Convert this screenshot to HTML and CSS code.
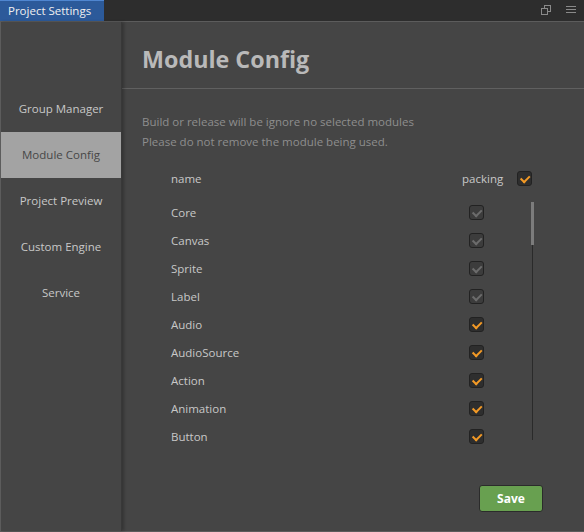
FILE: index.html
```html
<!DOCTYPE html>
<html lang="en">
<head>
    <meta charset="UTF-8">
    <title>Project Settings</title>
    <link rel="stylesheet" href="styles.css">
</head>
<body>
   <div class="titlebar">
    <span class="tab">Project Settings</span>
    <div class="win-icons">
        <svg width="10" height="10" viewBox="0 0 10 10"><rect x="3.5" y="0.5" width="6" height="6" fill="none" stroke="#8a8a8a"/><rect x="0.5" y="3.5" width="6" height="6" fill="#2d2d2d" stroke="#8a8a8a"/></svg>
        <svg width="10" height="8" viewBox="0 0 10 8"><rect x="0" y="0" width="10" height="1" fill="#8a8a8a"/><rect x="0" y="3" width="10" height="1" fill="#8a8a8a"/><rect x="0" y="6" width="10" height="1" fill="#8a8a8a"/></svg>
    </div>
   </div>

   <div class="main">
    <div class="sidebar">
        <div class="nav-item">Group Manager</div>
        <div class="nav-item active">Module Config</div>
        <div class="nav-item">Project Preview</div>
        <div class="nav-item">Custom Engine</div>
        <div class="nav-item">Service</div>
    </div>

    <div class="content">
        <h1 class="header">Module Config</h1>
        <div class="desc">
            <p>Build or release will be ignore no selected modules</p>
            <p>Please do not remove the module being used.</p>
        </div>
        <div class="table-head">
            <span class="col-name">name</span>
            <span class="col-packing">packing</span>
            <span class="check on"></span>
        </div>
        <div class="table-body">
            <div class="rows">
                <div class="row"><span class="col-name">Core</span><span class="check locked"></span></div>
                <div class="row"><span class="col-name">Canvas</span><span class="check locked"></span></div>
                <div class="row"><span class="col-name">Sprite</span><span class="check locked"></span></div>
                <div class="row"><span class="col-name">Label</span><span class="check locked"></span></div>
                <div class="row"><span class="col-name">Audio</span><span class="check on"></span></div>
                <div class="row"><span class="col-name">AudioSource</span><span class="check on"></span></div>
                <div class="row"><span class="col-name">Action</span><span class="check on"></span></div>
                <div class="row"><span class="col-name">Animation</span><span class="check on"></span></div>
                <div class="row last"><span class="col-name">Button</span><span class="check on"></span></div>
            </div>
            <div class="scrollbar"><div class="thumb"></div></div>
        </div>
        <div class="footer">
            <button class="save-btn">Save</button>
        </div>
    </div>
   </div>
</body>
</html>
```

FILE: styles.css
```css
*{
    margin:0;
    padding:0;
    box-sizing:border-box;
}
body{
    width:584px;
    height:532px;
    background:#454545;
    font-family:'Open Sans',sans-serif;
    overflow:hidden;
}
.titlebar{
    height:22px;
    background:#2d2d2d;
    border-bottom:1px solid #5c5c5c;
    display:flex;
    justify-content:space-between;
}
.tab{
    width:104px;
    height:21px;
    background:#2c5a9a;
    border-top:1px solid #4f86d0;
    color:#f0f0f0;
    font-size:11.5px;
    line-height:19px;
    padding-left:8px;
}
.win-icons{
    display:flex;
    align-items:center;
    gap:15px;
    padding-right:8px;
    padding-bottom:2px;
}
.main{
    display:flex;
    height:510px;
    border-bottom:1px solid #5c5c5c;
}
.sidebar{
    width:122px;
    background:#454545;
    border-left:1px solid #5c5c5c;
    border-right:1px solid #383838;
    box-shadow:2px 0 3px rgba(0,0,0,0.25);
    padding-top:64px;
    position:relative;
}
.nav-item{
    height:46px;
    line-height:46px;
    text-align:center;
    font-size:11.5px;
    color:#c8c8c8;
}
.nav-item.active{
    background:#a3a3a3;
    color:#474747;
}
.content{
    flex:1;
    display:flex;
    flex-direction:column;
}
.header{
    height:67px;
    border-bottom:1px solid #606060;
    font-size:23.3px;
    font-weight:700;
    color:#b9b9b9;
    padding-left:20px;
    line-height:74px;
}
.desc{
    padding:23px 0 0 20px;
    font-size:11.5px;
    line-height:20px;
    color:#8e8e8e;
}
.table-head{
    display:flex;
    align-items:center;
    height:26px;
    margin-top:13px;
    padding-left:49px;
    font-size:11.5px;
    color:#c8c8c8;
}
.table-head .col-name{
    width:291px;
}
.table-head .col-packing{
    width:55px;
}
.table-body{
    display:flex;
    height:250px;
    margin-top:7px;
}
.rows{
    width:410px;
    height:250px;
    overflow:hidden;
}
.row{
    display:flex;
    align-items:center;
    height:28px;
    padding-left:49px;
    font-size:11.5px;
    color:#c8c8c8;
}
.row.last{
    height:22px;
    align-items:flex-end;
    padding-bottom:0;
}
.row .col-name{
    width:298px;
}
.check{
    width:15px;
    height:15px;
    border:1px solid #222;
    border-radius:3px;
    background:#2e2e2e;
    position:relative;
}
.check::after{
    content:"";
    position:absolute;
    left:2px;
    top:1px;
    width:7px;
    height:4px;
    border-left:2px solid #f39a26;
    border-bottom:2px solid #f39a26;
    transform:rotate(-45deg) translate(-1px,2px);
}
.check.locked{
    background:#3c3c3c;
}
.check.locked::after{
    border-color:#6c6c6c;
}
.scrollbar{
    width:3px;
    height:238px;
    margin-top:4px;
    border-left:1px solid #2a2a2a;
    position:relative;
}
.thumb{
    width:3px;
    height:43px;
    background:#7c7c7c;
    margin-left:-2px;
}
.footer{
    display:flex;
    justify-content:flex-end;
    padding:37px 41px 0 0;
}
.save-btn{
    all:unset;
    width:62px;
    height:25px;
    background:#68a050;
    border:1px solid #2b2b2b;
    border-radius:3px;
    color:#fff;
    font-family:'Open Sans',sans-serif;
    font-weight:700;
    font-size:12px;
    text-align:center;
    line-height:23px;
}
```
